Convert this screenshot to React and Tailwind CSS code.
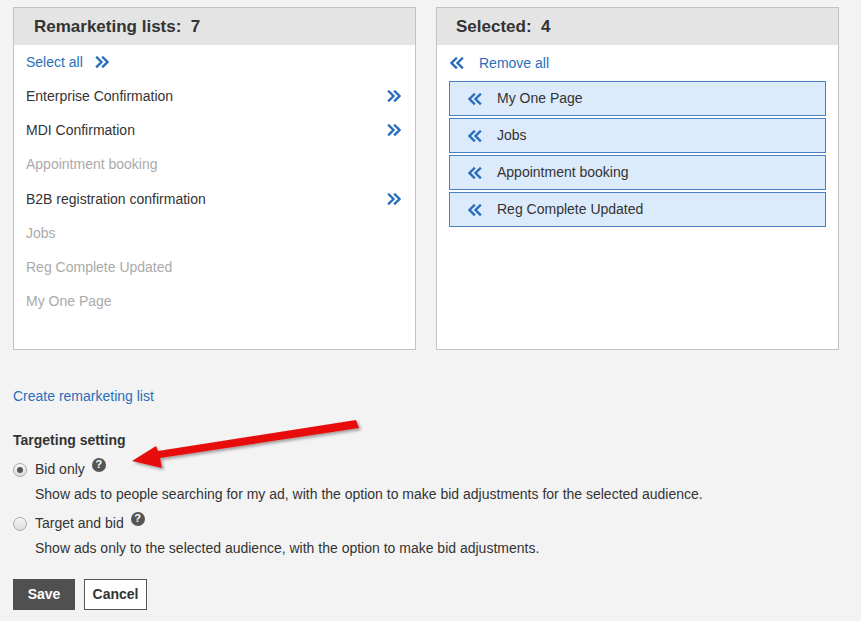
import React from "react";

const Chev = ({ dir = "r", cls = "" }) => (
  <svg width="14" height="12" viewBox="0 0 14 12" className={cls}>
    <g fill="none" stroke="currentColor" strokeWidth="2.4" strokeLinecap="square" transform={dir === "l" ? "translate(14,0) scale(-1,1)" : ""}>
      <path d="M2 1.5 L6.5 6 L2 10.5" />
      <path d="M8 1.5 L12.5 6 L8 10.5" />
    </g>
  </svg>
);

const Help = () => (
  <span className="inline-flex items-center justify-center w-[14px] h-[14px] rounded-full bg-[#555] text-white text-[11px] font-bold leading-none ml-[7px] relative -top-[5px]">?</span>
);

const Radio = ({ on }) => (
  <span className="w-[14px] h-[14px] rounded-full border border-[#aaa] bg-gradient-to-b from-[#f5f5f5] to-[#ddd] inline-flex items-center justify-center mr-[8px] shrink-0">
    {on && <span className="w-[6px] h-[6px] rounded-full bg-[#555]" />}
  </span>
);

export default function App() {
  const left = [
    ["Enterprise Confirmation", true],
    ["MDI Confirmation", true],
    ["Appointment booking", false],
    ["B2B registration confirmation", true],
    ["Jobs", false],
    ["Reg Complete Updated", false],
    ["My One Page", false],
  ];
  const right = ["My One Page", "Jobs", "Appointment booking", "Reg Complete Updated"];
  return (
    <div className="w-[861px] h-[621px] bg-[#f3f3f3] relative text-[14px] text-[#333]" style={{ fontFamily: "Arial, 'Liberation Sans', sans-serif" }}>
      <div className="pt-[7px] px-[13px] flex gap-[20px]">
        <div className="w-[403px] h-[343px] border border-[#c3c3c3] bg-white">
          <div className="h-[37px] bg-[#e4e4e4] flex items-center pl-[20px] text-[17px] font-bold text-[#333]">Remarketing lists:&nbsp; 7</div>
          <div className="px-[12px]">
            <div className="h-[34px] flex items-center text-[#2a6ebb]">
              <span>Select all</span>
              <Chev cls="ml-[12px] text-[#2a6ebb]" />
            </div>
            {left.map(([t, a]) => (
              <div key={t} className={`h-[34.3px] flex items-center justify-between pr-[2px] ${a ? "text-[#333]" : "text-[#aaa]"}`}>
                <span>{t}</span>
                {a && <Chev cls="text-[#2a6ebb]" />}
              </div>
            ))}
          </div>
        </div>
        <div className="w-[403px] h-[343px] border border-[#c3c3c3] bg-white">
          <div className="h-[37px] bg-[#e4e4e4] flex items-center pl-[19px] text-[17px] font-bold text-[#333]">Selected:&nbsp; 4</div>
          <div className="px-[12px]">
            <div className="h-[36px] flex items-center text-[#2a6ebb]">
              <Chev dir="l" cls="ml-[1px] mr-[15px] text-[#2a6ebb]" />
              <span>Remove all</span>
            </div>
            <div className="flex flex-col gap-[2px]">
              {right.map((t) => (
                <div key={t} className="h-[35px] border border-[#4a7fc1] bg-[#dcebfb] flex items-center pl-[18px]">
                  <Chev dir="l" cls="mr-[15px] text-[#2a6ebb]" />
                  <span>{t}</span>
                </div>
              ))}
            </div>
          </div>
        </div>
      </div>

      <div className="px-[13px]">
        <div className="mt-[36px] text-[#2a6ebb]">Create remarketing list</div>
        <div className="mt-[23px] font-bold text-[#333]">Targeting setting</div>
        <div className="mt-[8px] flex items-center"><Radio on /><span>Bid only</span><Help /></div>
        <div className="pl-[22px] mt-[4px]">Show ads to people searching for my ad, with the option to make bid adjustments for the selected audience.</div>
        <div className="mt-[8px] flex items-center"><Radio /><span>Target and bid</span><Help /></div>
        <div className="pl-[22px] mt-[4px]">Show ads only to the selected audience, with the option to make bid adjustments.</div>
        <div className="mt-[20px] flex gap-[9px]">
          <button className="w-[62px] h-[31px] bg-[#505050] text-white font-bold">Save</button>
          <button className="w-[63px] h-[31px] bg-white border border-[#555] text-[#333] font-bold">Cancel</button>
        </div>
      </div>

      <svg className="absolute left-0 top-0 pointer-events-none" width="861" height="621">
        <defs>
          <filter id="sh" x="-10%" y="-50%" width="120%" height="200%">
            <feDropShadow dx="2" dy="2" stdDeviation="1.5" floodColor="#000" floodOpacity="0.35" />
          </filter>
        </defs>
        <g filter="url(#sh)" fill="#e80d0d">
          <path d="M356 420 L359 428 L160 458 L162 468 L132 461 L156 446 L158 451 Z" />
        </g>
      </svg>
    </div>
  );
}
